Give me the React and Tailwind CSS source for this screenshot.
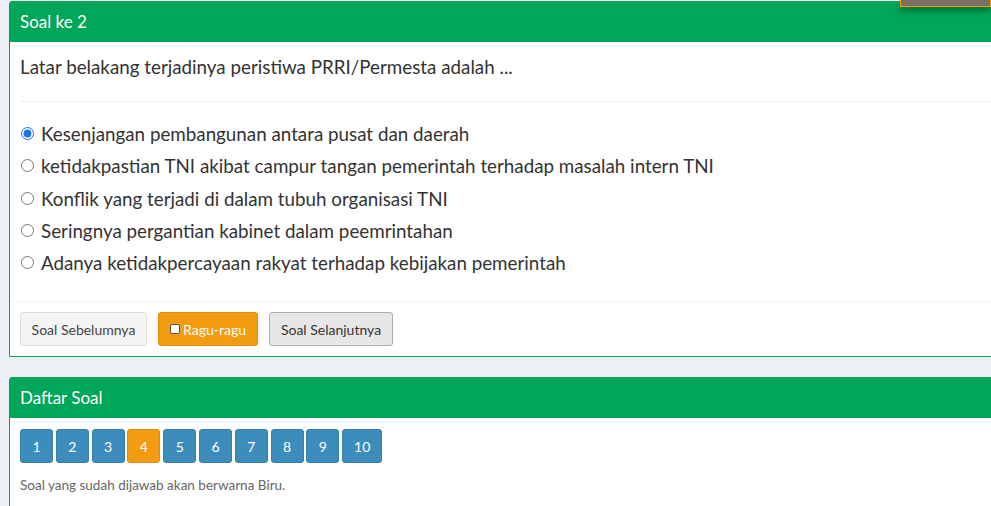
import { useState } from "react";

const options = [
  "Kesenjangan pembangunan antara pusat dan daerah",
  "ketidakpastian TNI akibat campur tangan pemerintah terhadap masalah intern TNI",
  "Konflik yang terjadi di dalam tubuh organisasi TNI",
  "Seringnya pergantian kabinet dalam peemrintahan",
  "Adanya ketidakpercayaan rakyat terhadap kebijakan pemerintah",
];

const numbers = [1, 2, 3, 4, 5, 6, 7, 8, 9, 10];

const App = () => {
  const [answer, setAnswer] = useState(0);
  const [ragu, setRagu] = useState(false);

  return (
    <div className="relative w-[991px] h-[506px] overflow-hidden bg-[#ecf0f5] font-['Lato','Open_Sans',sans-serif] text-[#333]">
      {/* dropdown edge at top right */}
      <div className="absolute right-0 top-0 w-[91px] h-[7px] bg-[#7a6f61] border border-t-0 border-[#f39c12] shadow-[0_4px_6px_rgba(0,0,0,0.35)] z-10" />

      <div className="pt-px pl-[9px]">
        <div className="w-[1000px] bg-white border border-[#00a65a] rounded-t-[3px]">
          <div className="h-10 bg-[#00a65a] text-white text-[17px] flex items-center px-[10px]">
            Soal ke 2
          </div>
          <div className="px-[10px]">
            <div className="h-[59px] pt-[13px] text-[18.8px] leading-[24px]">
              Latar belakang terjadinya peristiwa PRRI/Permesta adalah ...
            </div>
            <div className="border-t border-[#eee] pt-[20px] pb-[27px] flex flex-col gap-[9.25px]">
              {options.map((o, i) => (
                <label key={i} className="flex items-center gap-[6px] text-[18.8px] leading-[23px] cursor-pointer">
                  <input
                    type="radio"
                    name="jawab"
                    checked={answer === i}
                    onChange={() => setAnswer(i)}
                    className="w-[13px] h-[13px] mx-[1px] accent-[#1a73e8]"
                  />
                  <span>{o}</span>
                </label>
              ))}
            </div>
          </div>
          <div className="border-t border-[#f4f4f4] px-[10px] pt-[10px] pb-[10px] flex gap-[11px] text-[14px]">
            <button className="h-[34px] w-[127px] rounded-[3px] bg-[#f4f4f4] border border-[#ddd] text-[#444]">
              Soal Sebelumnya
            </button>
            <button
              onClick={() => setRagu(!ragu)}
              className="h-[34px] w-[100px] rounded-[3px] bg-[#f39c12] border border-[#e08e0b] text-white flex items-center justify-center gap-[3px]"
            >
              <span className={`w-[10px] h-[10px] rounded-[2px] border border-[#555] ${ragu ? "bg-[#555]" : "bg-white"}`} />
              Ragu-ragu
            </button>
            <button className="h-[34px] w-[124px] rounded-[3px] bg-[#e7e7e7] border border-[#adadad] text-[#333]">
              Soal Selanjutnya
            </button>
          </div>
        </div>

        <div className="mt-[20px] w-[1000px] bg-white border border-[#00a65a] rounded-t-[3px]">
          <div className="h-10 bg-[#00a65a] text-white text-[17px] flex items-center px-[10px]">
            Daftar Soal
          </div>
          <div className="px-[10px] pt-[11px] pb-[20px]">
            <div className="flex gap-[2.8px]">
              {numbers.map((n) => (
                <button
                  key={n}
                  className={`h-[34px] ${n === 10 ? "w-[40px]" : "w-[33px]"} rounded-[3px] text-white text-[14px] border ${
                    n === 4 ? "bg-[#f39c12] border-[#e08e0b]" : "bg-[#3c8dbc] border-[#367fa9]"
                  }`}
                >
                  {n}
                </button>
              ))}
            </div>
            <p className="mt-[12px] text-[13.5px] text-[#666]">
              Soal yang sudah dijawab akan berwarna Biru.
            </p>
          </div>
        </div>
      </div>
    </div>
  );
};

export default App;
